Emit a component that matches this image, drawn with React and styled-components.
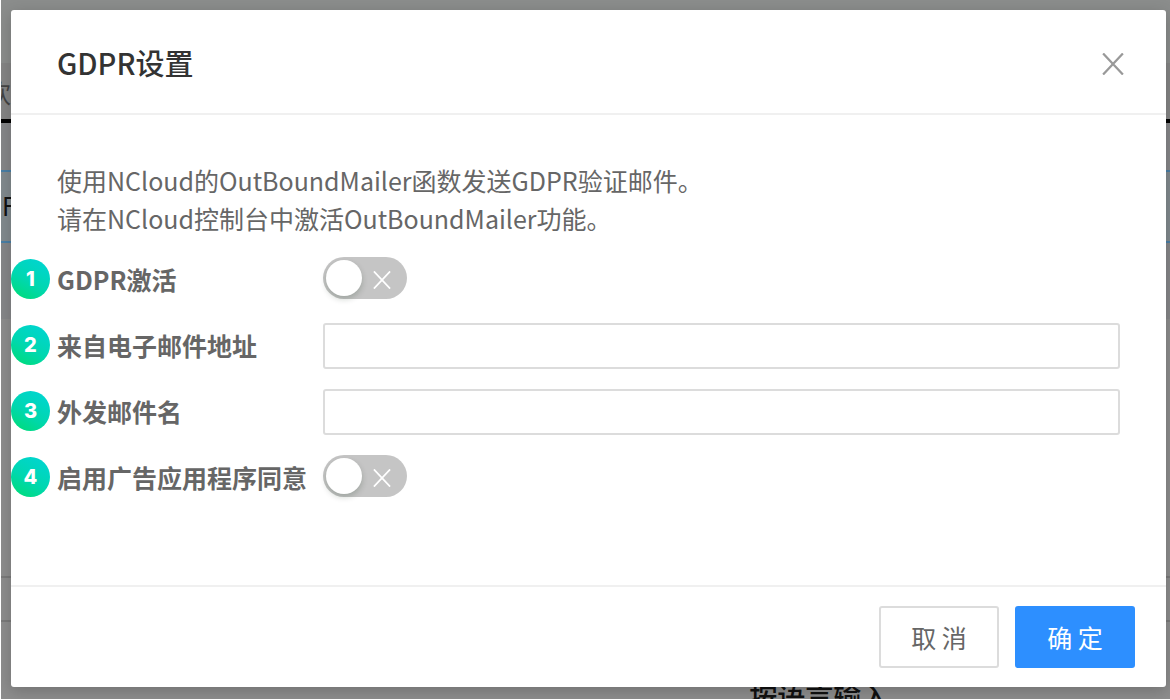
import React, { useState } from "react";
import styled, { createGlobalStyle } from "styled-components";

const GlobalStyle = createGlobalStyle`
  *, *::before, *::after { box-sizing: border-box; }
  body {
    margin: 0;
    background: #fff;
    color: #666;
    font-family: "Noto Sans CJK SC", "Noto Sans", sans-serif;
    font-size: 25px;
  }
  button, input { font: inherit; color: inherit; }
`;

const Stage = styled.div`
  display: grid;
  grid-template: minmax(calc(100vh - 1px), auto) / 1fr;
  margin: 0 0 1px 1px;
  overflow: hidden;

  > * { grid-area: 1 / 1; min-width: 0; }
`;

const Underlay = styled.div`
  display: flex;
  flex-direction: column;
  height: calc(100vh - 1px);
  overflow: hidden;
  background: #8d8d8d;
  color: #111;
`;

const TopBar = styled.div`
  flex: none;
  height: 63px;
  background: #8b8d8c;
`;

const TabStrip = styled.div`
  flex: none;
  display: flex;
  align-items: center;
  height: 60px;
  padding-top: 2px;
  border-bottom: 4px solid #000;
  background: #858585;
  color: #444;
`;

const TabText = styled.span`
  margin-left: -15px;
`;

const FieldBand = styled.div`
  flex: none;
  height: 196px;
  padding-top: 47px;
  background: #868789;
`;

const ActiveField = styled.div`
  display: flex;
  align-items: center;
  height: 73px;
  padding: 0 0 4px 1px;
  border: solid #4a7fa6;
  border-width: 2px 0;
  background: #828a8e;
`;

const QuietField = styled.div`
  flex: none;
  height: 46px;
  margin-top: 257px;
  border: solid #7a7a7a;
  border-width: 2px 0;
`;

const FormCaption = styled.div`
  flex: none;
  margin-top: 54px;
  padding-left: 64%;
  font-size: 28px;
  font-weight: 500;
  line-height: 40px;
`;

const Dialog = styled.section`
  position: relative;
  display: flex;
  flex-direction: column;
  margin: 10px 4px 12px 10px;
  border-radius: 3px;
  background: #fff;
  box-shadow: 0 4px 16px rgba(0, 0, 0, 0.2);
`;

const Header = styled.header`
  display: flex;
  align-items: center;
  justify-content: space-between;
  height: 105px;
  padding: 0 36px 0 46px;
  border-bottom: 2px solid #f0f0f0;
`;

const Title = styled.h1`
  margin: 0;
  color: #333;
  font-size: 29px;
  font-weight: 500;
  line-height: 40px;
`;

const CloseButton = styled.button`
  display: grid;
  place-items: center;
  width: 34px;
  height: 38px;
  padding: 5px 0 0;
  border: 0;
  background: none;
  color: #999;
  cursor: pointer;
`;

const Body = styled.div`
  flex: 1;
  padding: 46px;
`;

const Description = styled.p`
  margin: 0 0 20px;
  line-height: 38px;
`;

const Fields = styled.div`
  display: grid;
  gap: 20px;
`;

const Row = styled.div`
  position: relative;
  display: grid;
  grid-template-columns: 266px 1fr;
  height: 46px;
`;

const Label = styled.label`
  font-weight: 700;
  line-height: 44px;
  white-space: nowrap;
`;

const Badge = styled.span`
  position: absolute;
  top: 2px;
  left: -46px;
  display: grid;
  place-items: center;
  width: 39px;
  height: 40px;
  border-radius: 50%;
  background: linear-gradient(30deg, #00dc78 5%, #00d7b0 45%, #00d5cc 85%);
  color: #fff;
  font: 800 20px/40px Inter, "Liberation Sans", sans-serif;
`;

const TextField = styled.input`
  width: 100%;
  height: 46px;
  padding: 0 12px;
  border: 2px solid #dcdcdc;
  border-radius: 3px;
  background: #fff;
`;

const Switch = styled.span`
  position: relative;
  display: flex;
  align-items: center;
  justify-content: space-between;
  width: 84px;
  height: 42px;
  padding: 0 16px 0 3px;
  border-radius: 21px;
  background: ${({ $on }) => ($on ? "#2d8cff" : "#c5c5c5")};
  flex-direction: ${({ $on }) => ($on ? "row-reverse" : "row")};
  color: #fff;

  svg { margin-top: 4px; }
`;

const SwitchInput = styled.input`
  position: absolute;
  inset: 0;
  width: 100%;
  height: 100%;
  margin: 0;
  opacity: 0;
  cursor: pointer;
`;

const Knob = styled.span`
  width: 36px;
  height: 36px;
  border-radius: 50%;
  background: #fff;
  box-shadow: 0 3px 6px rgba(0, 35, 11, 0.2);
`;

const Footer = styled.footer`
  display: flex;
  justify-content: flex-end;
  gap: 16px;
  padding: 19px 31px 19px;
  border-top: 2px solid #f0f0f0;
`;

const Button = styled.button`
  width: 120px;
  height: 62px;
  padding: 0;
  border: 2px solid ${({ $primary }) => ($primary ? "#2d8fff" : "#dcdcdc")};
  border-radius: 3px;
  background: ${({ $primary }) => ($primary ? "#2d8fff" : "#fff")};
  color: ${({ $primary }) => ($primary ? "#fff" : "#666")};
  cursor: pointer;
`;

function Cross({ size, stroke }) {
  return (
    <svg width={size} height={size} viewBox="0 0 20 20" fill="none" stroke="currentColor" strokeWidth={stroke} aria-hidden="true">
      <path d="M1 .4 19 19.6M19 .4 1 19.6" />
    </svg>
  );
}

function SwitchRow({ number, id, label }) {
  const [on, setOn] = useState(false);
  return (
    <Row>
      <Badge>{number}</Badge>
      <Label htmlFor={id}>{label}</Label>
      <Switch $on={on}>
        <Knob />
        <Cross size={18} stroke={1.9} />
        <SwitchInput id={id} type="checkbox" role="switch" checked={on} onChange={(e) => setOn(e.target.checked)} />
      </Switch>
    </Row>
  );
}

function TextRow({ number, id, label, type = "text" }) {
  return (
    <Row>
      <Badge>{number}</Badge>
      <Label htmlFor={id}>{label}</Label>
      <TextField id={id} type={type} />
    </Row>
  );
}

export default function App() {
  return (
    <>
      <GlobalStyle />
      <Stage>
        <Underlay aria-hidden="true">
          <TopBar />
          <TabStrip><TabText>欢</TabText></TabStrip>
          <FieldBand>
            <ActiveField>F</ActiveField>
          </FieldBand>
          <QuietField />
          <FormCaption>按语言输入</FormCaption>
        </Underlay>
        <Dialog role="dialog" aria-labelledby="dialog-title">
          <Header>
            <Title id="dialog-title">GDPR设置</Title>
            <CloseButton type="button" aria-label="关闭">
              <Cross size={22} stroke={2} />
            </CloseButton>
          </Header>
          <Body>
            <Description>
              使用NCloud的OutBoundMailer函数发送GDPR验证邮件。
              <br />
              请在NCloud控制台中激活OutBoundMailer功能。
            </Description>
            <Fields>
              <SwitchRow number={1} id="gdpr" label="GDPR激活" />
              <TextRow number={2} id="from-email" label="来自电子邮件地址" type="email" />
              <TextRow number={3} id="sender-name" label="外发邮件名" />
              <SwitchRow number={4} id="ad-consent" label="启用广告应用程序同意" />
            </Fields>
          </Body>
          <Footer>
            <Button type="button">取 消</Button>
            <Button type="button" $primary>确 定</Button>
          </Footer>
        </Dialog>
      </Stage>
    </>
  );
}
